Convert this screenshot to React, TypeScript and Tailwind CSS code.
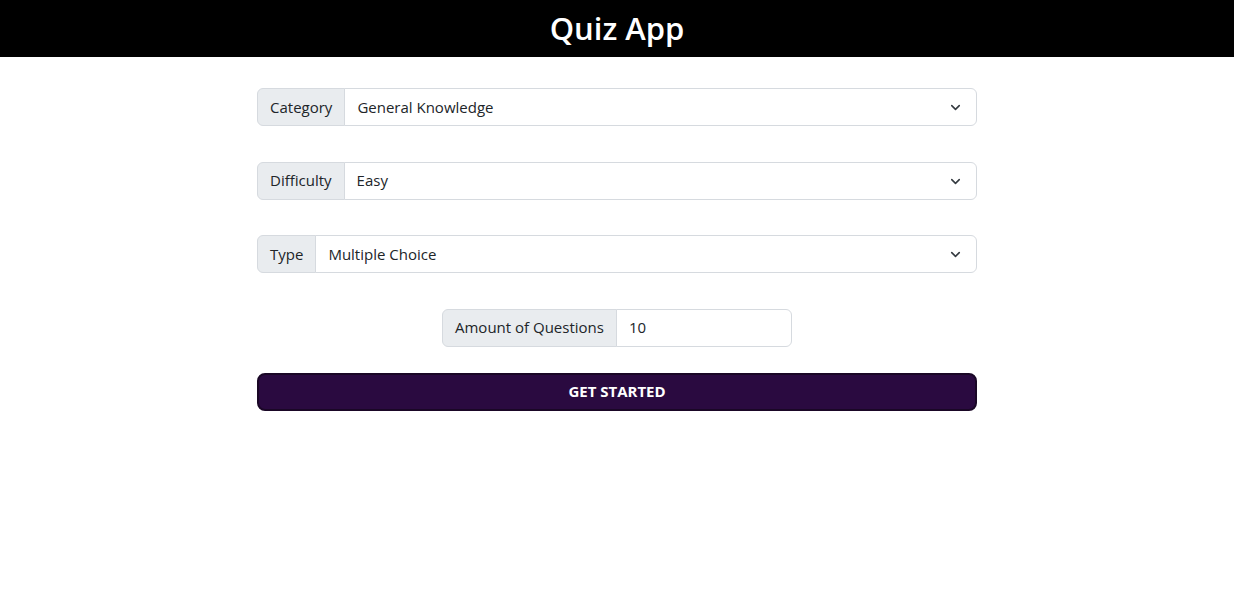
import { ChevronDown } from 'lucide-react'

const font = { fontFamily: '"Open Sans", "Noto Sans", Arial, sans-serif' }

type SelectRowProps = { label: string; value: string }

function SelectRow({ label, value }: SelectRowProps) {
  return (
    <div className="flex h-[38px] w-full text-[15px] text-[#212529]">
      <div className="flex items-center rounded-l-[6px] border border-[#d6dadf] bg-[#e9ecef] px-3">{label}</div>
      <div className="relative -ml-px flex flex-1 items-center rounded-r-[6px] border border-[#d6dadf] bg-white pl-3">
        {value}
        <ChevronDown className="absolute right-[13px] top-[11px] h-[15px] w-[15px] text-[#343a40]" strokeWidth={2.5} />
      </div>
    </div>
  )
}

export default function App() {
  return (
    <div className="min-h-[593px] bg-white" style={font}>
      {/* header bar */}
      <header className="flex h-[57px] items-center justify-center bg-black">
        <h1 className="text-[31px] font-semibold leading-none text-white">Quiz App</h1>
      </header>

      <main className="mx-auto flex w-[720px] flex-col items-center pt-[31px]">
        <div className="flex w-full flex-col gap-[35.5px]">
          <SelectRow label="Category" value="General Knowledge" />
          <SelectRow label="Difficulty" value="Easy" />
          <SelectRow label="Type" value="Multiple Choice" />
        </div>

        <div className="mt-[35.5px] flex h-[38px] w-[350px] text-[15px] text-[#212529]">
          <div className="flex items-center rounded-l-[6px] border border-[#d6dadf] bg-[#e9ecef] px-3">Amount of Questions</div>
          <div className="-ml-px flex flex-1 items-center rounded-r-[6px] border border-[#d6dadf] bg-white pl-3">10</div>
        </div>

        <button className="mt-[26px] flex h-[38px] w-full items-center justify-center rounded-[8px] border-2 border-[#1a0726] bg-[#2a0a40] text-[15px] font-bold text-white">
          GET STARTED
        </button>
      </main>
    </div>
  )
}
